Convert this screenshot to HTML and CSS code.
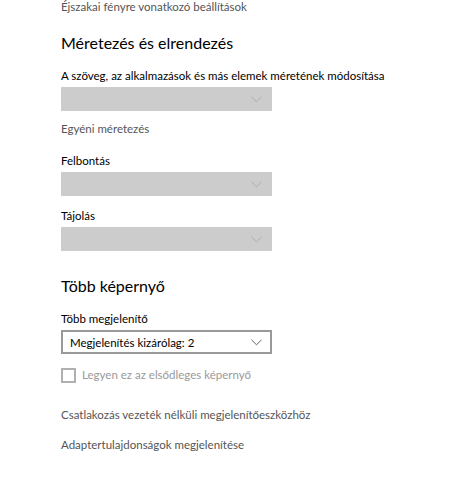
FILE: index.html
```html
<!DOCTYPE html>
<html lang="hu">
<head>
    <meta charset="UTF-8">
    <title>Kijelző</title>
    <link rel="stylesheet" href="styles.css">
</head>
<body>
    <div class="settings">
        <a class="link top-link">Éjszakai fényre vonatkozó beállítások</a>

        <h2>Méretezés és elrendezés</h2>
        <label class="field-label">A szöveg, az alkalmazások és más elemek méretének módosítása</label>
        <div class="select disabled"><span></span><svg class="chevron" viewBox="0 0 12 7"><path d="M0.5 0.5 L6 6 L11.5 0.5"/></svg></div>
        <a class="link custom-link">Egyéni méretezés</a>

        <label class="field-label">Felbontás</label>
        <div class="select disabled"><span></span><svg class="chevron" viewBox="0 0 12 7"><path d="M0.5 0.5 L6 6 L11.5 0.5"/></svg></div>

        <label class="field-label">Tájolás</label>
        <div class="select disabled"><span></span><svg class="chevron" viewBox="0 0 12 7"><path d="M0.5 0.5 L6 6 L11.5 0.5"/></svg></div>

        <h2 class="second">Több képernyő</h2>
        <label class="field-label">Több megjelenítő</label>
        <div class="select"><span>Megjelenítés kizárólag: 2</span><svg class="chevron" viewBox="0 0 12 7"><path d="M0.5 0.5 L6 6 L11.5 0.5"/></svg></div>

        <div class="checkbox-row">
            <span class="checkbox"></span>
            <span>Legyen ez az elsődleges képernyő</span>
        </div>

        <a class="link bottom-link">Csatlakozás vezeték nélküli megjelenítőeszközhöz</a>
        <a class="link bottom-link">Adaptertulajdonságok megjelenítése</a>
    </div>
</body>
</html>
```

FILE: styles.css
```css
body {
    margin: 0;
    background-color: #fff;
    font-family: Lato, 'Noto Sans', sans-serif;
    font-size: 11.5px;
    color: #000;
}
.settings {
    display: flex;
    flex-direction: column;
    align-items: flex-start;
    padding: 0 0 0 61px;
}
.link {
    color: #555;
    line-height: 16px;
}
.top-link {
    margin-top: -1px;
}
h2 {
    font-weight: normal;
    font-size: 16px;
    line-height: 22px;
    margin: 17px 0 0 0;
    color: #000;
}
h2.second {
    margin-top: 24px;
}
.field-label {
    line-height: 16px;
    margin-top: 16px;
    margin-bottom: 3px;
}
h2 + .field-label {
    margin-top: 14px;
}
.select + .field-label {
    margin-top: 12px;
}
.select {
    box-sizing: border-box;
    width: 211px;
    height: 24px;
    display: flex;
    align-items: center;
    justify-content: space-between;
    padding: 0 8px 0 7px;
    border: 2px solid #999;
    background-color: #fff;
}
.select.disabled {
    background-color: #ccc;
    border-color: #ccc;
}
.chevron {
    width: 11px;
    height: 7px;
    fill: none;
    stroke: #555;
    stroke-width: 1;
}
.disabled .chevron {
    stroke: #aaa;
}
.custom-link {
    margin-top: 10px;
}
.checkbox-row {
    display: flex;
    align-items: center;
    gap: 6px;
    margin-top: 13px;
    color: #999;
    line-height: 16px;
}
.checkbox {
    box-sizing: border-box;
    width: 15px;
    height: 15px;
    border: 2px solid #b0b0b0;
}
.bottom-link {
    margin-top: 24px;
}
.bottom-link + .bottom-link {
    margin-top: 14px;
}
```
